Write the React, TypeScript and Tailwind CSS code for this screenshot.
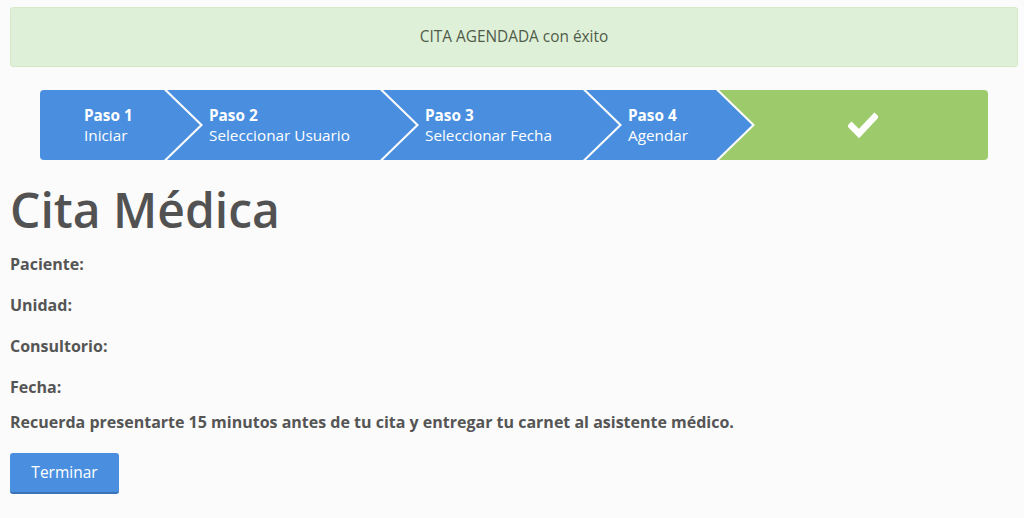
import React from 'react';

const steps = [
  { title: 'Paso 1', label: 'Iniciar', width: 'w-[160px]' },
  { title: 'Paso 2', label: 'Seleccionar Usuario', width: 'w-[249px]' },
  { title: 'Paso 3', label: 'Seleccionar Fecha', width: 'w-[236px]' },
  { title: 'Paso 4', label: 'Agendar', width: 'w-[166px]' },
];

const firstClip = 'polygon(0 0, calc(100% - 36px) 0, 100% 50%, calc(100% - 36px) 100%, 0 100%)';
const midClip = 'polygon(0 0, calc(100% - 36px) 0, 100% 50%, calc(100% - 36px) 100%, 0 100%, 36px 50%)';
const lastClip = 'polygon(0 0, 100% 0, 100% 100%, 0 100%, 36px 50%)';

const App: React.FC = () => {
  return (
    <div className="min-h-[518px] bg-[#fbfbfb] pt-[7px] font-['Open_Sans',sans-serif] text-[#555]">
      <div className="ml-[10px] w-[1008px]">
        {/* Alert */}
        <div className="h-[60px] rounded-[3px] border border-[#d6e9c6] bg-[#dff0d8] flex items-center justify-center text-[15.4px] text-[#4f5c49]">
          CITA AGENDADA con éxito
        </div>

        {/* Stepper */}
        <div className="mx-[30px] mt-[23px] flex h-[70px] rounded-[4px] overflow-hidden">
          {steps.map((s, i) => (
            <div
              key={s.title}
              className={`${s.width} shrink-0 h-full bg-[#4a8fdf] text-white flex items-center ${i === 0 ? 'pl-[44px]' : 'pl-[42px] -ml-[33px]'}`}
              style={{ clipPath: i === 0 ? firstClip : midClip }}
            >
              <div className="text-[15.3px] leading-[20px]">
                <div className="font-bold">{s.title}</div>
                <div>{s.label}</div>
              </div>
            </div>
          ))}
          <div
            className="w-[269px] shrink-0 -ml-[33px] h-full bg-[#9dcb6c] flex items-center justify-center pl-[18px]"
            style={{ clipPath: lastClip }}
          >
            <svg width="30" height="28" viewBox="0 0 30 28">
              <polyline points="3.5,15 11,22.5 26.5,6" fill="none" stroke="#fff" strokeWidth="6.5" strokeLinecap="square" strokeLinejoin="miter" />
            </svg>
          </div>
        </div>

        {/* Content */}
        <h1 className="mt-[23px] text-[48px] leading-[53px] font-semibold text-[#525252]">Cita Médica</h1>
        <div className="mt-[17px] text-[16px] leading-[22px] font-bold text-[#555]">
          <p>Paciente:</p>
          <p className="mt-[19px]">Unidad:</p>
          <p className="mt-[19px]">Consultorio:</p>
          <p className="mt-[19px]">Fecha:</p>
          <p className="mt-[13px]">Recuerda presentarte 15 minutos antes de tu cita y entregar tu carnet al asistente médico.</p>
        </div>
        <button className="mt-[20px] w-[109px] h-[41px] rounded-[3px] bg-[#4a8fdf] border-b-2 border-[#3a74b8] text-white text-[15.5px]">
          Terminar
        </button>
      </div>
    </div>
  );
};

export default App;
